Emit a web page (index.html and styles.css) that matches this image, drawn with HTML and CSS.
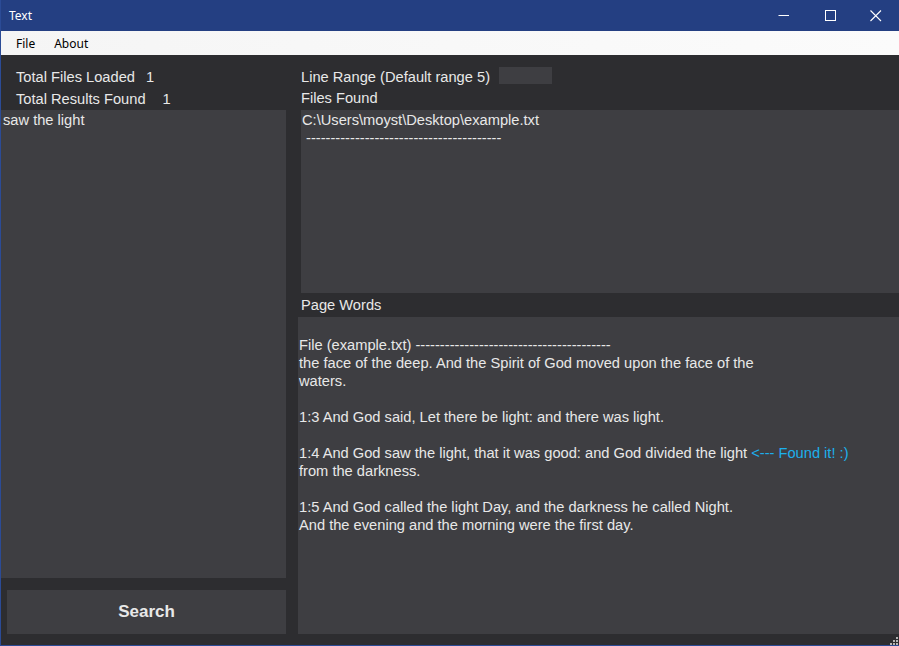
FILE: index.html
```html
<!DOCTYPE html>
<html>
<head>
<meta charset="utf-8">
<link rel="stylesheet" href="styles.css">
</head>
<body>
<div class="window">
  <div class="titlebar">
    <span class="title">Text</span>
    <div class="controls">
      <div class="ctl"><svg width="12" height="12" viewBox="0 0 12 12"><line x1="0.5" y1="5.5" x2="11" y2="5.5" stroke="#fff" stroke-width="1"/></svg></div>
      <div class="ctl"><svg width="12" height="12" viewBox="0 0 12 12"><rect x="1.5" y="0.5" width="10" height="10" fill="none" stroke="#fff" stroke-width="1"/></svg></div>
      <div class="ctl"><svg width="12" height="12" viewBox="0 0 12 12"><path d="M0.5 0.5 L11 11 M11 0.5 L0.5 11" stroke="#fff" stroke-width="1.1"/></svg></div>
    </div>
  </div>
  <div class="menubar">
    <span class="menuitem">File</span>
    <span class="menuitem">About</span>
  </div>
  <div class="main">
    <div class="left">
      <div class="stats">
        <div class="statrow"><span>Total Files Loaded</span><span class="val v1">1</span></div>
        <div class="statrow"><span>Total Results Found</span><span class="val v2">1</span></div>
      </div>
      <div class="querybox">saw the light</div>
      <div class="btnwrap"><div class="searchbtn">Search</div></div>
    </div>
    <div class="right">
      <div class="rangerow"><span>Line Range (Default range 5)</span><span class="rangeinput"></span></div>
      <div class="label fflabel">Files Found</div>
      <div class="filesbox">C:\Users\moyst\Desktop\example.txt<br>&nbsp;----------------------------------------</div>
      <div class="label pwlabel">Page Words</div>
      <div class="pagebox"><br>File (example.txt) ----------------------------------------<br>the face of the deep. And the Spirit of God moved upon the face of the<br>waters.<br><br>1:3 And God said, Let there be light: and there was light.<br><br>1:4 And God saw the light, that it was good: and God divided the light <span class="found">&lt;--- Found it! :)</span><br>from the darkness.<br><br>1:5 And God called the light Day, and the darkness he called Night.<br>And the evening and the morning were the first day.</div>
    </div>
  </div>
  <div class="statusbar">
    <svg class="grip" width="12" height="12" viewBox="0 0 12 12">
      <rect x="9" y="3" width="2" height="2" fill="#b4b4b4"/>
      <rect x="6" y="6" width="2" height="2" fill="#b4b4b4"/>
      <rect x="9" y="6" width="2" height="2" fill="#b4b4b4"/>
      <rect x="3" y="9" width="2" height="2" fill="#b4b4b4"/>
      <rect x="6" y="9" width="2" height="2" fill="#b4b4b4"/>
      <rect x="9" y="9" width="2" height="2" fill="#b4b4b4"/>
    </svg>
  </div>
</div>
</body>
</html>
```
FILE: styles.css
```css
* { box-sizing: border-box; }
html, body { margin: 0; padding: 0; background: #2d2d30; }
.window {
  width: 899px; height: 646px;
  display: flex; flex-direction: column;
  border-left: 1px solid #2b4b96;
  border-bottom: 1px solid #2b4b96;
  overflow: hidden;
  font-family: "Liberation Sans", Arial, sans-serif;
  font-size: 14.67px;
  color: #e8e8e8;
}
.titlebar {
  height: 31px; flex: none;
  background: #243f82;
  display: flex; align-items: center; justify-content: space-between;
  margin-left: -1px;
}
.title { font-family: "Noto Sans", sans-serif; font-size: 12px; color: #fff; padding-left: 9px; }
.controls { display: flex; height: 100%; }
.ctl { width: 46px; height: 100%; display: flex; align-items: center; justify-content: center; }
.menubar {
  height: 24px; flex: none;
  background: linear-gradient(to right, #f5f5f5, #fbfbfb);
  display: flex; align-items: center;
  padding-left: 15px; gap: 19px;
  font-family: "Noto Sans", sans-serif; font-size: 12px; color: #000;
}
.main { flex: 1; display: flex; min-height: 0; }
.left { width: 285px; flex: none; display: flex; flex-direction: column; }
.stats { height: 55px; padding-top: 11px; padding-left: 15px; }
.statrow { height: 22px; line-height: 22px; white-space: pre; }
.val.v1 { margin-left: 11px; }
.val.v2 { margin-left: 17px; }
.querybox { flex: 1; background: #3e3e42; padding: 1px 2px; line-height: 18px; }
.btnwrap { padding: 12px 0 0 6px; }
.searchbtn {
  height: 44px; background: #3e3e42;
  display: flex; align-items: center; justify-content: center;
  font-weight: bold; font-size: 17px; color: #e8e8e8;
}
.right { flex: 1; margin-left: 12px; display: flex; flex-direction: column; }
.rangerow { height: 32px; padding: 12px 0 0 3px; display: flex; align-items: flex-start; }
.rangerow span:first-child { line-height: 18px; margin-top: 1px; }
.rangeinput { width: 53px; height: 17px; background: #3e3e42; margin-left: 9px; }
.label { padding-left: 3px; }
.fflabel { height: 23px; line-height: 22px; }
.filesbox {
  margin-left: 3px; height: 183px; background: #3e3e42;
  padding: 1px 1px; line-height: 18px; white-space: nowrap;
}
.pwlabel { height: 24px; line-height: 24px; }
.pagebox { flex: 1; background: #3e3e42; padding: 1px 1px; line-height: 18px; white-space: nowrap; }
.found { color: #1cb0ec; }
.statusbar { height: 11px; flex: none; position: relative; }
.grip { position: absolute; right: 0; bottom: -1px; }
```
